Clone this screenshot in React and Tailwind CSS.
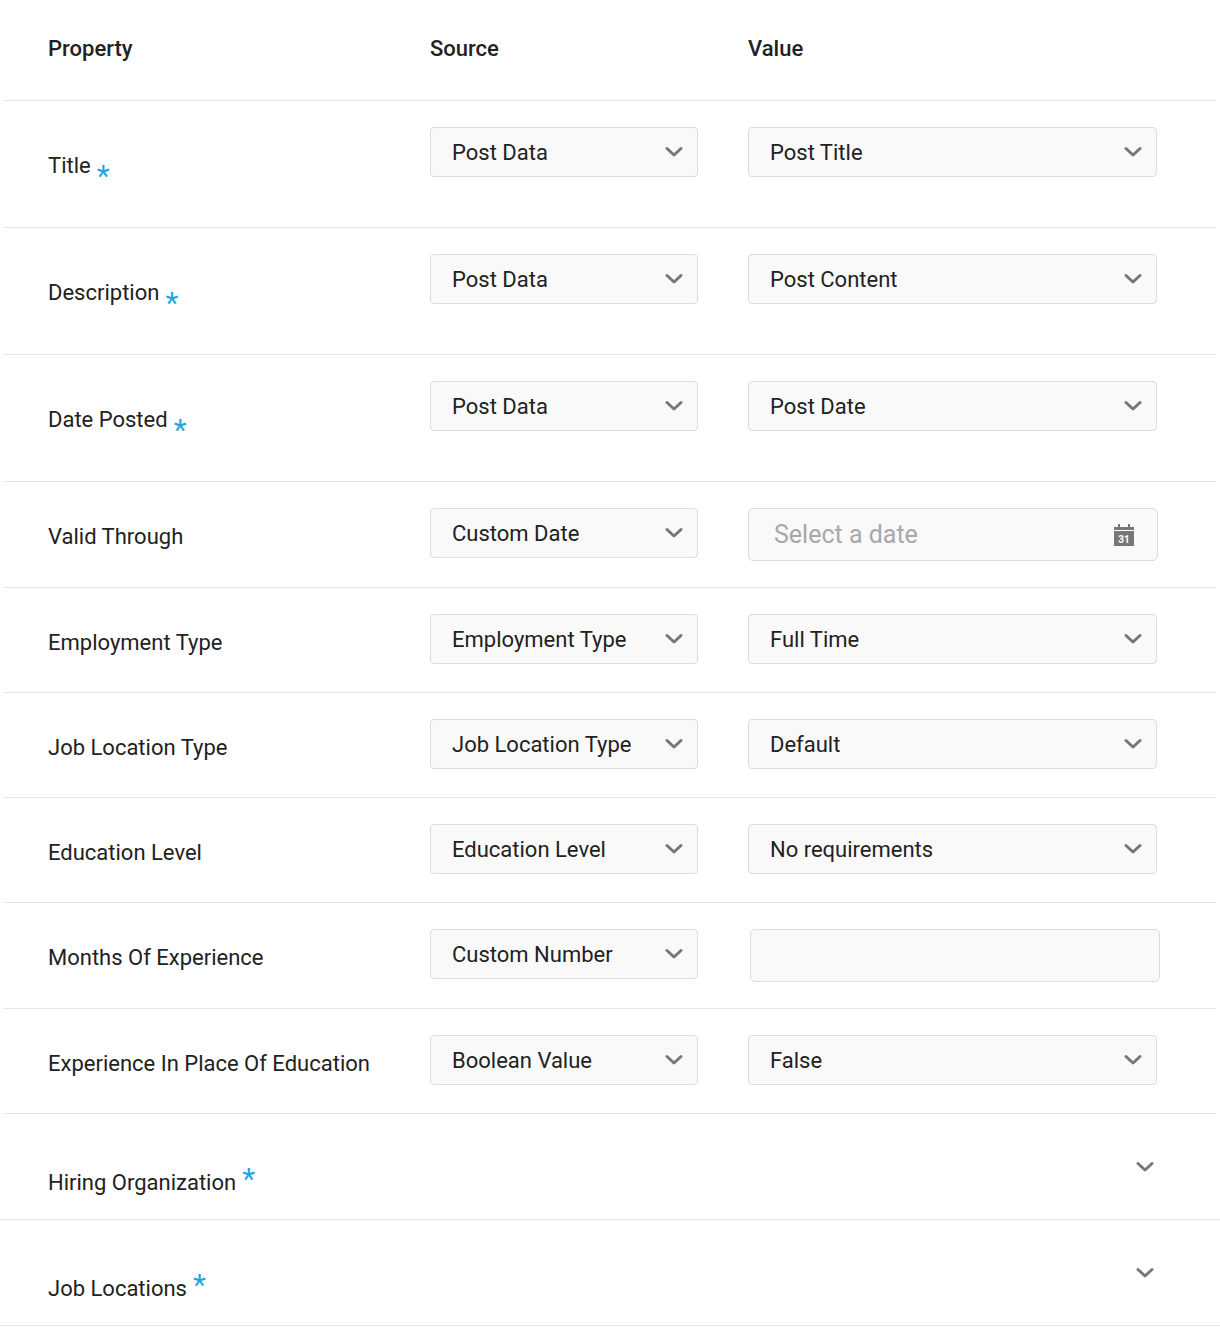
import React from "react";

const Chevron = ({ className = "" }) => (
  <svg width="18" height="12" viewBox="0 0 18 12" className={className}>
    <path d="M2 2.5 L9 9 L16 2.5" fill="none" stroke="#777" strokeWidth="3" strokeLinecap="round" strokeLinejoin="round" />
  </svg>
);

const Select = ({ text, wide }) => (
  <div
    className={`flex items-center justify-between h-[50px] rounded-[4px] border border-[#dcdcdc] bg-[#f9f9f9] pl-[21px] pr-[14px] text-[22px] text-[#222] ${
      wide ? "w-[409px]" : "w-[268px]"
    }`}
  >
    <span className="truncate">{text}</span>
    <Chevron />
  </div>
);

const Star = ({ low }) => (
  <span className={`text-[#1fa5e3] text-[30px] ml-[6px] relative ${low ? "top-[10px]" : "top-[-4px]"}`}>*</span>
);

const rows = [
  { label: "Title", req: true, src: "Post Data", val: "Post Title", h: "h-[127px]" },
  { label: "Description", req: true, src: "Post Data", val: "Post Content", h: "h-[127px]" },
  { label: "Date Posted", req: true, src: "Post Data", val: "Post Date", h: "h-[127px]" },
  { label: "Valid Through", src: "Custom Date", date: true, h: "h-[106px]" },
  { label: "Employment Type", src: "Employment Type", val: "Full Time", h: "h-[105px]" },
  { label: "Job Location Type", src: "Job Location Type", val: "Default", h: "h-[105px]" },
  { label: "Education Level", src: "Education Level", val: "No requirements", h: "h-[105px]" },
  { label: "Months Of Experience", src: "Custom Number", num: true, h: "h-[106px]" },
  { label: "Experience In Place Of Education", src: "Boolean Value", val: "False", h: "h-[105px]" },
];

export default function App() {
  return (
    <div className="w-[1220px] bg-white text-[#333]" style={{ fontFamily: "Roboto, 'Liberation Sans', sans-serif" }}>
      <div className="mx-[4px] border-b border-[#e5e5e5] h-[101px] flex items-center text-[22px] font-medium text-[#222] pb-[4px]">
        <div className="w-[426px] pl-[44px]">Property</div>
        <div className="w-[318px]">Source</div>
        <div>Value</div>
      </div>
      {rows.map((r) => (
        <div key={r.label} className={`mx-[4px] border-b border-[#e5e5e5] flex items-start ${r.h}`}>
          <div className={`w-[426px] pl-[44px] text-[22px] text-[#222] flex items-center ${r.req ? "pt-[42px]" : "pt-[38px]"}`}>
            {r.label}
            {r.req && <Star low />}
          </div>
          <div className="w-[318px] pt-[26px]">
            <Select text={r.src} />
          </div>
          <div className="pt-[26px]">
            {r.date ? (
              <div className="flex items-center justify-between h-[53px] w-[410px] rounded-[5px] border border-[#dcdcdc] bg-[#f9f9f9] pl-[25px] pr-[22px] text-[25px] text-[#a8a8a8]">
                <span>Select a date</span>
                <svg width="22" height="24" viewBox="0 0 22 24">
                  <rect x="1" y="4" width="20" height="19" fill="#777" />
                  <rect x="5" y="1" width="2" height="5" fill="#777" />
                  <rect x="15" y="1" width="2" height="5" fill="#777" />
                  <rect x="1" y="7" width="20" height="1" fill="#fff" />
                  <text x="11" y="20" fontSize="10" fontWeight="bold" fill="#fff" textAnchor="middle" fontFamily="Roboto, sans-serif">31</text>
                </svg>
              </div>
            ) : r.num ? (
              <div className="ml-[2px] h-[53px] w-[410px] rounded-[5px] border border-[#dcdcdc] bg-[#f9f9f9]" />
            ) : (
              <Select text={r.val} wide />
            )}
          </div>
        </div>
      ))}
      {["Hiring Organization", "Job Locations"].map((l) => (
        <div key={l} className="border-b border-[#e5e5e5] h-[106px] flex items-start justify-between pl-[48px] pr-[66px]">
          <div className="pt-[46px] text-[22px] text-[#222] flex items-center">
            {l}
            <Star />
          </div>
          <div className="pt-[47px]">
            <Chevron />
          </div>
        </div>
      ))}
    </div>
  );
}
